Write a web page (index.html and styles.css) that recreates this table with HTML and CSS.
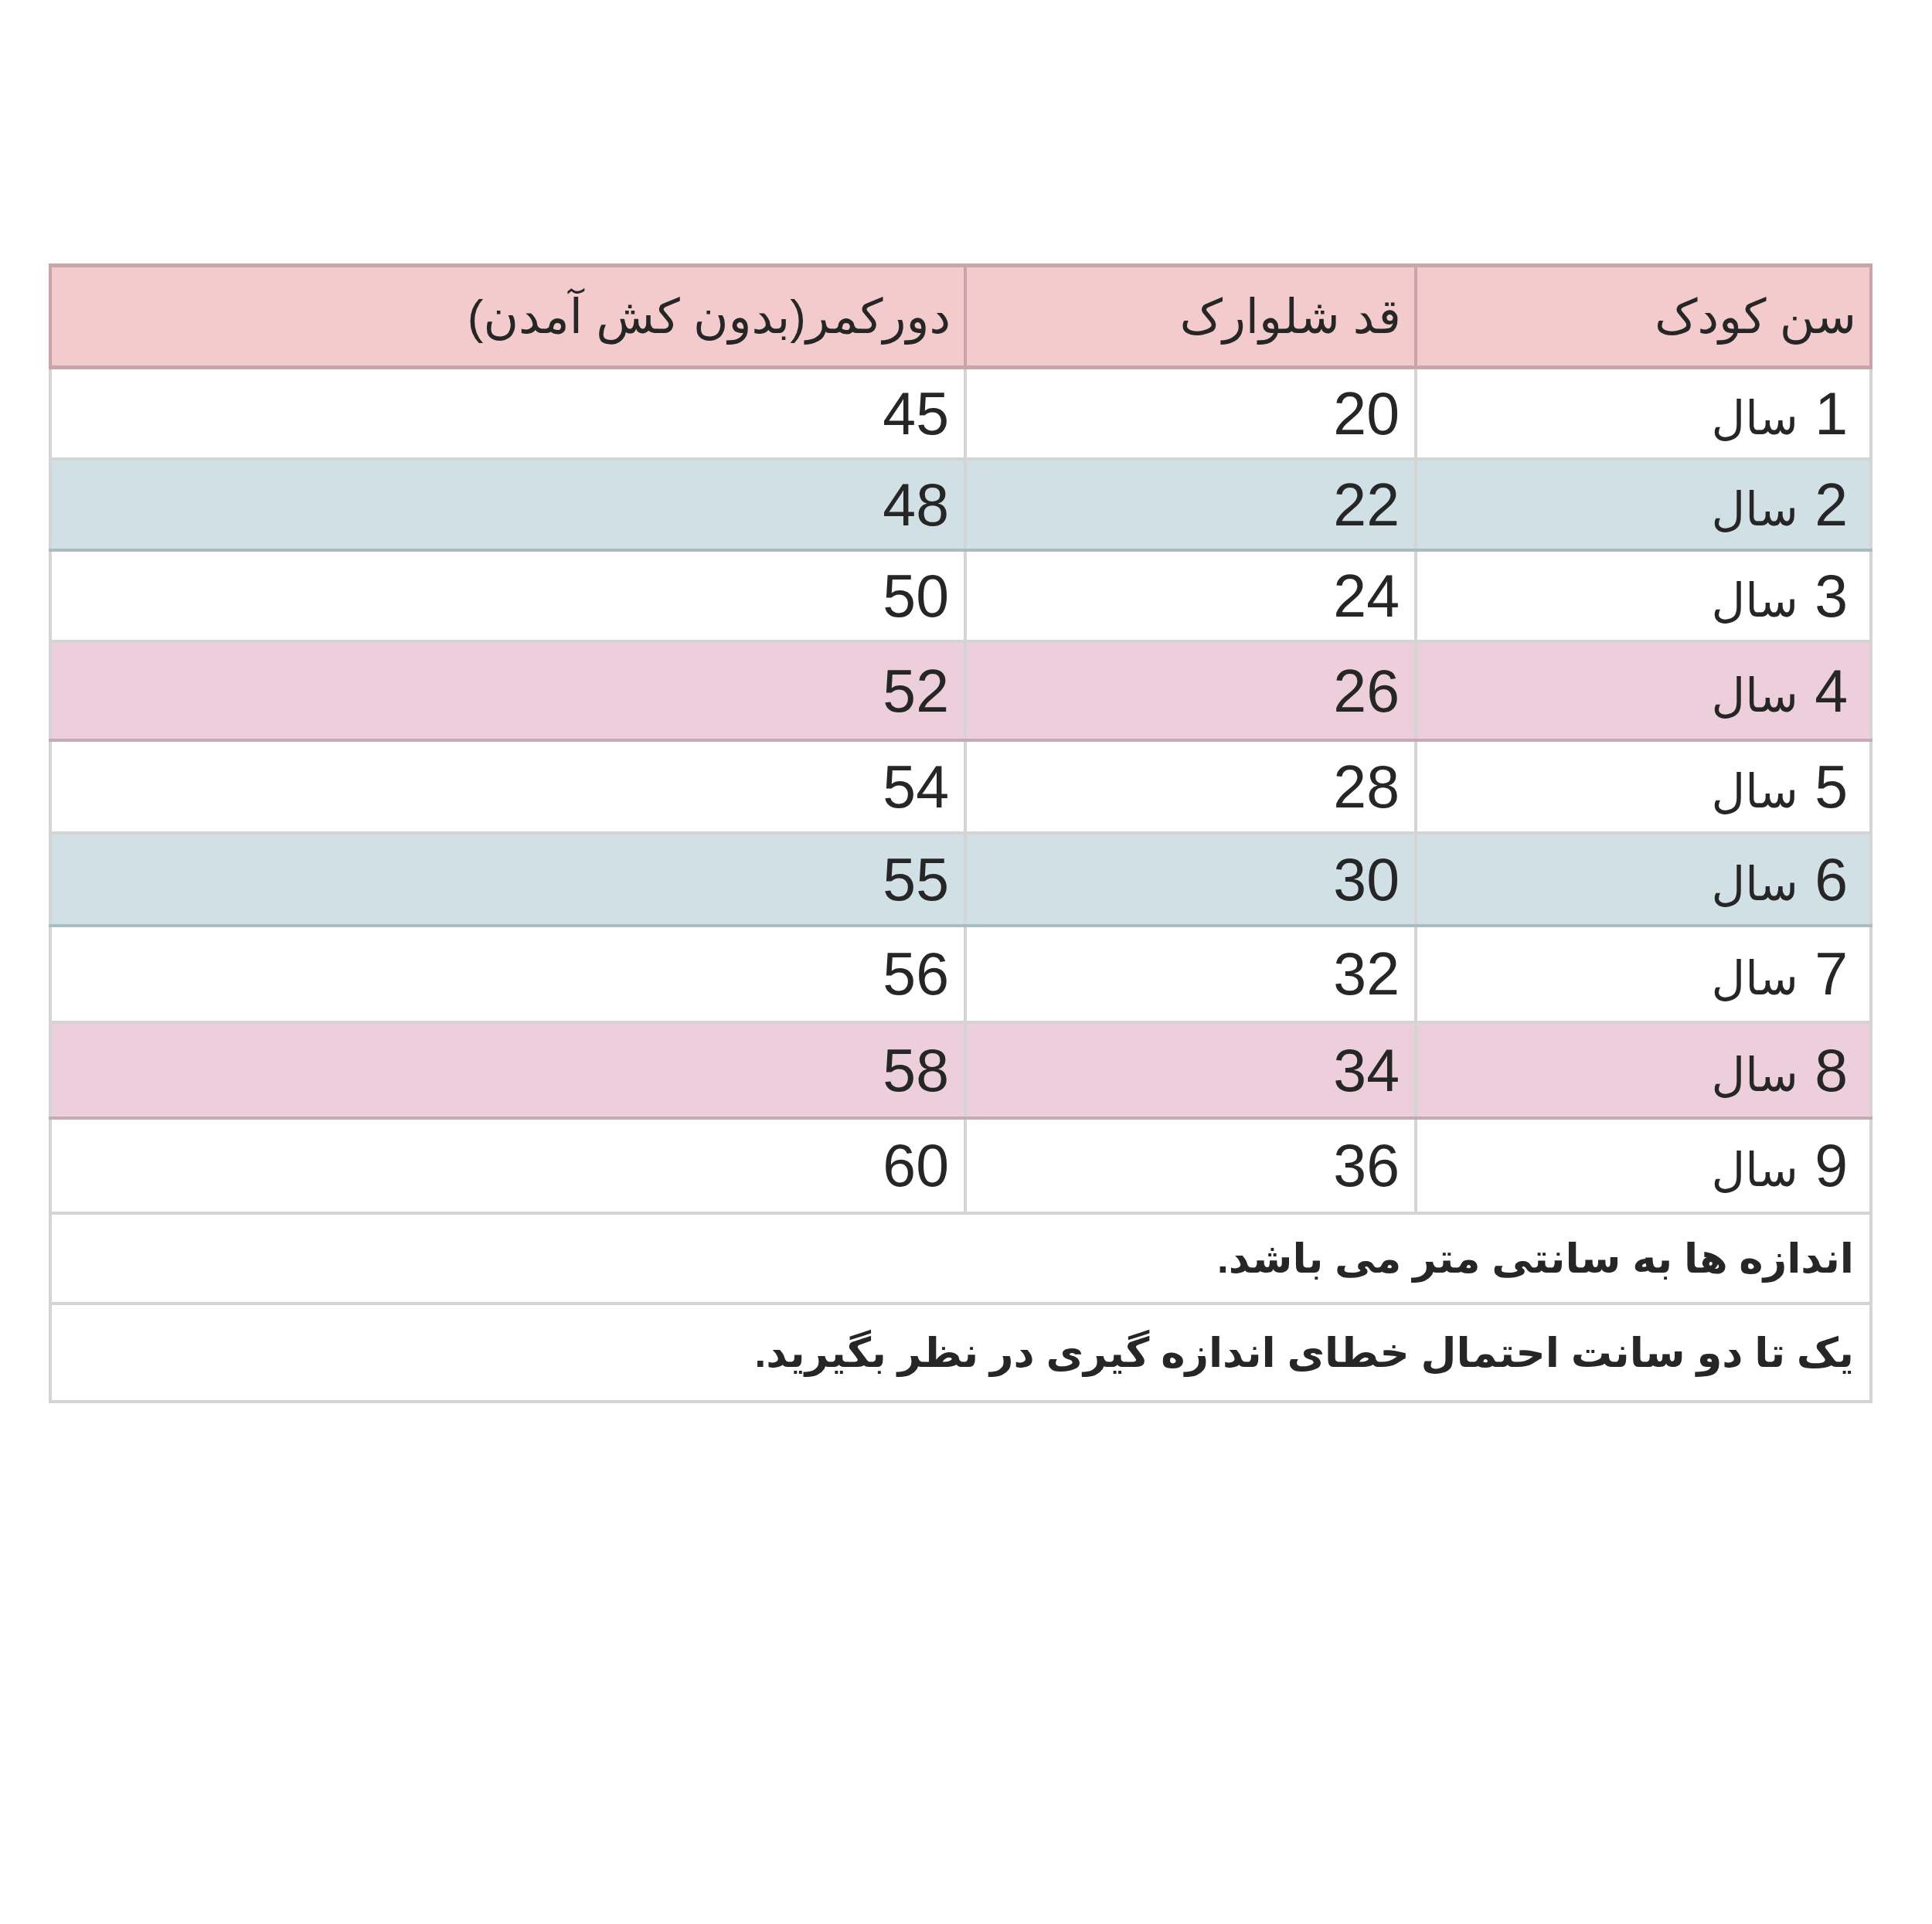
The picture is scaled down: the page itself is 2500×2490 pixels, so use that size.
FILE: index.html
```html
<!DOCTYPE html>
<html lang="fa" dir="rtl">
<head>
<meta charset="utf-8">
<title>جدول سایز</title>
<link rel="stylesheet" href="styles.css">
</head>
<body>
<main class="page">
  <table class="sizes">
    <colgroup>
      <col class="c-age">
      <col class="c-len">
      <col class="c-waist">
    </colgroup>
    <thead>
      <tr class="head">
        <th>سن کودک</th>
        <th>قد شلوارک</th>
        <th>دورکمر(بدون کش آمدن)</th>
      </tr>
    </thead>
    <tbody>
      <tr class="r white"><td>1 <span class="unit">سال</span></td><td>20</td><td>45</td></tr>
      <tr class="r blue"><td>2 <span class="unit">سال</span></td><td>22</td><td>48</td></tr>
      <tr class="r white"><td>3 <span class="unit">سال</span></td><td>24</td><td>50</td></tr>
      <tr class="r pink"><td>4 <span class="unit">سال</span></td><td>26</td><td>52</td></tr>
      <tr class="r white"><td>5 <span class="unit">سال</span></td><td>28</td><td>54</td></tr>
      <tr class="r blue"><td>6 <span class="unit">سال</span></td><td>30</td><td>55</td></tr>
      <tr class="r white"><td>7 <span class="unit">سال</span></td><td>32</td><td>56</td></tr>
      <tr class="r pink"><td>8 <span class="unit">سال</span></td><td>34</td><td>58</td></tr>
      <tr class="r white"><td>9 <span class="unit">سال</span></td><td>36</td><td>60</td></tr>
      <tr class="note"><td colspan="3">اندازه ها به سانتی متر می باشد.</td></tr>
      <tr class="note"><td colspan="3">یک تا دو سانت احتمال خطای اندازه گیری در نظر بگیرید.</td></tr>
    </tbody>
  </table>
</main>
</body>
</html>
```

FILE: styles.css
```css
html, body {
  margin: 0;
  padding: 0;
  background: #ffffff;
}

.page {
  width: 2500px;
  min-height: 2490px;
  padding: 341px 77px 0 67px;
  box-sizing: border-box;
}

.sizes {
  width: 2356px;
  border-collapse: collapse;
  table-layout: fixed;
  font-family: "Liberation Sans", "DejaVu Sans", sans-serif;
  color: #262626;
}

.c-age { width: 589px; }
.c-len { width: 583px; }
.c-waist { width: 1184px; }

.sizes th,
.sizes td {
  text-align: right;
  vertical-align: middle;
  padding: 0 19px 0 10px;
  border: 4px solid #d4d4d4;
  white-space: nowrap;
}

.head th {
  height: 127px;
  background: #f3cbcc;
  font-weight: normal;
  font-size: 62px;
  border-color: #c9a4a8;
  border-width: 5px 4px;
  padding-right: 17px;
}

.r td {
  height: 114px;
  font-size: 77px;
}

.r td:first-child {
  padding-right: 28px;
}

.unit {
  font-size: 60px;
}

.r.blue td {
  background: #d1e0e4;
  border-top-color: #a9bcbf;
  border-bottom-color: #a9bcbf;
}

.r.pink td {
  background: #edcfdb;
  border-top-color: #c6a9b4;
  border-bottom-color: #c6a9b4;
}

.sizes tbody tr:nth-child(4) td { height: 124px; }
.sizes tbody tr:nth-child(5) td { height: 116px; }
.sizes tbody tr:nth-child(6) td { height: 116px; }
.sizes tbody tr:nth-child(7) td { height: 121px; }
.sizes tbody tr:nth-child(8) td { height: 120px; }
.sizes tbody tr:nth-child(9) td { height: 119px; }

.note td {
  height: 113px;
  font-size: 53px;
  font-weight: bold;
  padding-right: 20px;
}

.sizes tbody tr:nth-child(11) td { height: 123px; }
```
